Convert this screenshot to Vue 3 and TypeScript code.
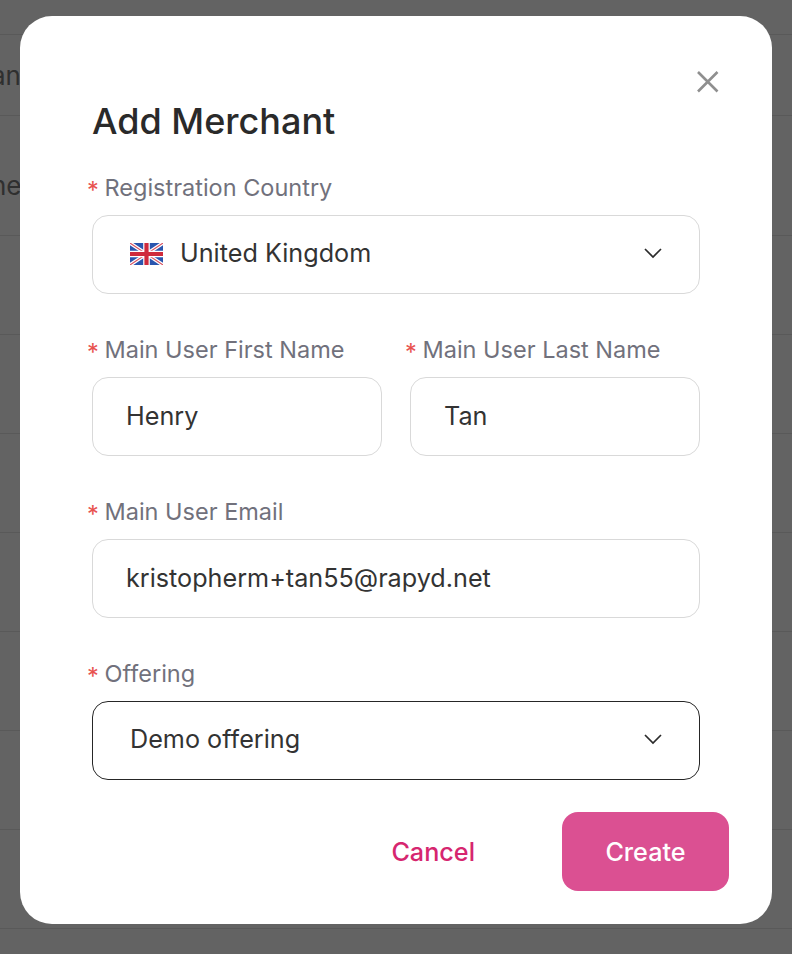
<script setup lang="ts">
const rows: string[] = ['an', 'ne', '', '', '', '', '', '', '']
</script>

<template>
  <div class="page">
    <div class="table">
      <div class="row first"></div>
      <div class="row r1"><span class="cell">an</span></div>
      <div class="row r2"><span class="cell">ne</span></div>
      <div v-for="n in rows.length - 2" :key="n" class="row"></div>
    </div>
    <div class="modal">
      <button class="close" type="button" aria-label="Close">
        <svg width="24" height="24" viewBox="0 0 24 24" fill="none">
          <path d="M2 2L21.5 21.5M21.5 2L2 21.5" stroke="#8f8f8f" stroke-width="2.6" />
        </svg>
      </button>
      <h1 class="title">Add Merchant</h1>

      <div class="field f-country">
        <label class="label">Registration Country</label>
        <div class="control select">
          <svg class="flag" width="33" height="22" viewBox="0 0 33 22">
            <rect width="33" height="22" fill="#2a55ae" />
            <path d="M0 0L33 22M33 0L0 22" stroke="#fff" stroke-width="3.6" />
            <path d="M0 0L33 22M33 0L0 22" stroke="#d9505f" stroke-width="1.1" />
            <path d="M16.5 0V22M0 11H33" stroke="#fff" stroke-width="6.6" />
            <path d="M16.5 0V22M0 11H33" stroke="#cf2a3c" stroke-width="4.2" />
          </svg>
          <span class="value">United Kingdom</span>
          <svg class="chev" width="18" height="11" viewBox="0 0 18 11" fill="none">
            <path d="M1 1L9 9L17 1" stroke="#2b2b2b" stroke-width="1.7" />
          </svg>
        </div>
      </div>

      <div class="two">
        <div class="field">
          <label class="label">Main User First Name</label>
          <div class="control text"><span class="value">Henry</span></div>
        </div>
        <div class="field">
          <label class="label">Main User Last Name</label>
          <div class="control text"><span class="value">Tan</span></div>
        </div>
      </div>

      <div class="field stacked">
        <label class="label">Main User Email</label>
        <div class="control text"><span class="value">kristopherm+tan55@rapyd.net</span></div>
      </div>

      <div class="field stacked">
        <label class="label">Offering</label>
        <div class="control select active">
          <span class="value">Demo offering</span>
          <svg class="chev" width="18" height="11" viewBox="0 0 18 11" fill="none">
            <path d="M1 1L9 9L17 1" stroke="#2b2b2b" stroke-width="1.7" />
          </svg>
        </div>
      </div>

      <div class="actions">
        <button class="cancel" type="button">Cancel</button>
        <button class="create" type="button">Create</button>
      </div>
    </div>
  </div>
</template>

<style>
html, body { margin: 0; padding: 0; }
</style>

<style scoped>
.page {
  position: relative;
  width: 792px;
  height: 954px;
  overflow: hidden;
  background: #636363;
  font-family: Inter, "Liberation Sans", sans-serif;
}
.row {
  height: 98px;
  border-bottom: 1px solid #595959;
  display: flex;
  align-items: center;
}
.first { height: 34px; }
.r1 { height: 80px; }
.r2 { height: 99px; padding-top: 20px; }
.cell {
  font-size: 26px;
  color: #2f2f2f;
  margin-left: -9px;
}
.modal {
  position: absolute;
  left: 20px;
  top: 16px;
  width: 752px;
  height: 908px;
  box-sizing: border-box;
  padding: 83px 72px 0;
  background: #fff;
  border-radius: 32px;
}
.close {
  position: absolute;
  left: 676px;
  top: 54px;
  width: 24px;
  height: 24px;
  padding: 0;
  border: 0;
  background: none;
}
.close svg { display: block; }
.title {
  margin: 0;
  font-size: 36px;
  line-height: 44px;
  font-weight: 500;
  color: #2a2a2a;
}
.field { display: flex; flex-direction: column; }
.f-country { margin-top: 29px; }
.label {
  font-size: 23.5px;
  line-height: 32px;
  color: #71717c;
  margin-bottom: 11px;
  position: relative;
  padding-left: 12.5px;
}
.label::before {
  content: "*";
  position: absolute;
  left: -5px;
  top: 2px;
  color: #e8524f;
}
.control {
  height: 79px;
  box-sizing: border-box;
  border: 1px solid #d9d9d9;
  border-radius: 16px;
  display: flex;
  align-items: center;
  background: #fff;
  padding-bottom: 2px;
}
.select { padding-left: 37px; padding-right: 37px; }
.select .value { margin-bottom: 2px; }
.text { padding-left: 33px; padding-right: 33px; }
.active { border-color: #262626; }
.value {
  font-size: 25.2px;
  line-height: 32px;
  color: #333;
  flex: 1;
  white-space: nowrap;
}
.flag { margin-right: 17px; flex: none; }
.chev { flex: none; }
.two {
  display: grid;
  grid-template-columns: 290px 290px;
  column-gap: 28px;
  margin-top: 40px;
}
.stacked { margin-top: 40px; }
.actions {
  display: flex;
  align-items: center;
  justify-content: flex-end;
  margin: 32px -29px 0 0;
}
.cancel, .create {
  font-family: inherit;
  font-size: 25.2px;
  font-weight: 500;
  border: 0;
  height: 79px;
  padding: 0;
}
.cancel {
  background: none;
  color: #d6266f;
  margin-right: 87px;
}
.create {
  width: 167px;
  background: #db5092;
  color: #fff;
  border-radius: 16px;
}
</style>
